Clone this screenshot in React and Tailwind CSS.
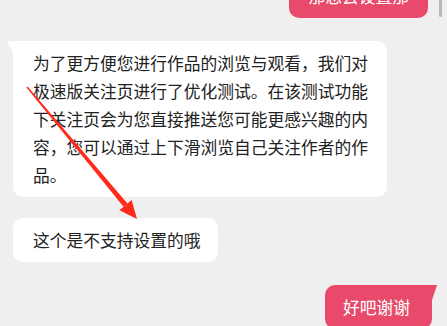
import React from 'react';

const font = { fontFamily: '"Noto Sans CJK SC", "Noto Sans", sans-serif' };

function LeftTail() {
  return (
    <svg className="absolute left-[-6px] top-0" width="7" height="14" viewBox="0 0 7 14">
      <polygon points="0,0 7,0 7,14" fill="#ffffff" />
    </svg>
  );
}

function RightTail() {
  return (
    <svg className="absolute right-[-5px] top-0" width="6" height="18" viewBox="0 0 6 18">
      <polygon points="0,0 6,0 0,18" fill="#e94a6b" />
    </svg>
  );
}

export default function App() {
  return (
    <div
      className="relative w-[447px] h-[326px] overflow-hidden bg-[#efefef] text-[16.75px] leading-[28px]"
      style={font}
    >
      {/* scrollbar */}
      <div className="absolute right-[5px] top-0 w-[3px] h-[17px] rounded-b bg-[#b9b9b9]"></div>

      <div className="flex flex-col">
        {/* top outgoing bubble (cut off) */}
        <div className="flex justify-end pr-[19px] mt-[-26px]">
          <div className="bg-[#e94a6b] text-white rounded-[10px] px-[19px] py-[8px] whitespace-nowrap">
            那您去设置那
          </div>
        </div>

        {/* long incoming bubble */}
        <div className="flex pl-[13px] mt-[23px]">
          <div className="relative bg-white text-[#222] rounded-[10px] rounded-tl-none w-[374px] pl-[20px] pr-[14px] py-[8px]">
            <LeftTail />
            为了更方便您进行作品的浏览与观看，我们对极速版关注页进行了优化测试。在该测试功能下关注页会为您直接推送您可能更感兴趣的内容，您可以通过上下滑浏览自己关注作者的作品。
          </div>
        </div>

        {/* short incoming bubble */}
        <div className="flex pl-[13px] mt-[21px]">
          <div className="relative bg-white text-[#222] rounded-[10px] w-[205px] pl-[20px] py-[8px] whitespace-nowrap">
            这个是不支持设置的哦
          </div>
        </div>

        {/* outgoing bubble */}
        <div className="flex justify-end pr-[15px] mt-[23px]">
          <div className="relative bg-[#e94a6b] text-white rounded-[10px] rounded-tr-none w-[107px] pl-[18px] py-[8px] whitespace-nowrap">
            <RightTail />
            好吧谢谢
          </div>
        </div>
      </div>

      {/* red annotation arrow */}
      <svg className="absolute left-0 top-0 pointer-events-none" width="447" height="326" viewBox="0 0 447 326">
        <polygon points="27.6,86.5 26.4,87.5 123.6,206.8 127.4,203.6" fill="#ff2a1a" />
        <polygon points="137,219 131.6,200.1 119.4,210.3" fill="#ff2a1a" />
      </svg>
    </div>
  );
}
